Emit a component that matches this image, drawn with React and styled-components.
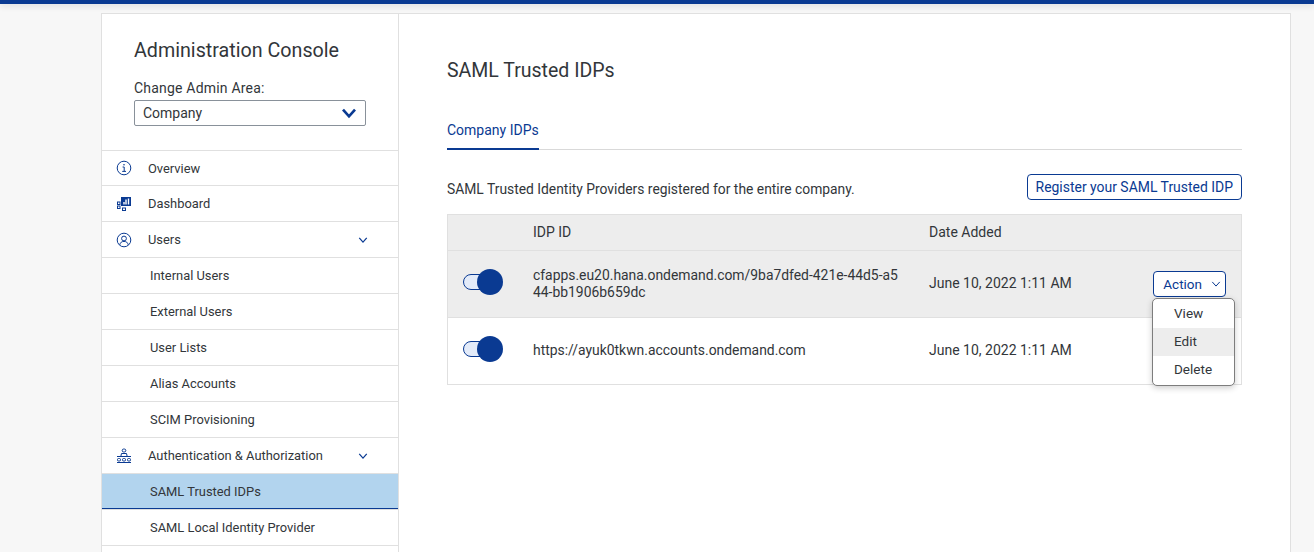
import React from 'react';
import styled, { createGlobalStyle } from 'styled-components';

const GlobalStyle = createGlobalStyle`
  html, body {
    margin: 0;
    height: 552px;
    overflow: hidden;
    background: #f7f7f7;
    font-family: Roboto, "Noto Sans", sans-serif;
    color: #32363a;
  }
`;

const TopBar = styled.div`
  height: 4px;
  background: #0a3a92;
  box-shadow: 0 2px 6px rgba(0, 0, 0, 0.12);
`;

const Shell = styled.div`
  display: flex;
  width: 1188px;
  height: 539px;
  margin: 9px 0 0 101px;
  overflow: hidden;
  background: #fff;
  border: 1px solid #e0e0e0;
  border-width: 1px 1px 0 1px;
`;

const Sidebar = styled.nav`
  width: 296px;
  flex: none;
  border-right: 1px solid #e0e0e0;
`;

const SideHead = styled.div`
  height: 136px;
  box-sizing: border-box;
  padding: 23px 32px 0 32px;
`;

const ConsoleTitle = styled.h2`
  margin: 0;
  font-size: 19.7px;
  font-weight: 400;
  line-height: 28px;
`;

const AreaLabel = styled.div`
  margin-top: 13px;
  font-size: 14px;
  line-height: 20px;
  letter-spacing: 0.2px;
`;

const AreaSelect = styled.div`
  display: flex;
  align-items: center;
  justify-content: space-between;
  width: 232px;
  height: 26px;
  box-sizing: border-box;
  margin-top: 2px;
  padding: 0 8px;
  border: 1px solid #89919a;
  border-radius: 2px;
  font-size: 14px;
`;

const NavRow = styled.div`
  display: flex;
  align-items: center;
  height: ${p => p.$height || 36}px;
  box-sizing: border-box;
  border-top: 1px solid #e0e0e0;
  padding-left: ${p => (p.$child ? 48 : 14)}px;
  padding-right: 30px;
  font-size: 12.9px;
  background: ${p => (p.$active ? '#b2d4ee' : 'transparent')};
  border-bottom: ${p => (p.$active ? '1px solid #0a3a92' : '0')};
`;

const NavIcon = styled.span`
  display: flex;
  width: 18px;
  height: 16px;
  margin-right: 14px;
  color: #0a3a92;
`;

const NavText = styled.span`
  flex: 1;
`;

const Main = styled.main`
  flex: 1;
  min-width: 0;
  padding: 43px 48px 0 48px;
`;

const PageTitle = styled.h1`
  margin: 0;
  font-size: 19.5px;
  font-weight: 400;
  line-height: 27px;
`;

const Tabs = styled.div`
  margin-top: 32px;
  border-bottom: 1px solid #d9d9d9;
  height: 34px;
  box-sizing: border-box;
`;

const Tab = styled.div`
  display: inline-block;
  height: 34px;
  box-sizing: border-box;
  font-size: 14px;
  line-height: 29px;
  color: #0a3a92;
  border-bottom: 2px solid #0a3a92;
`;

const IntroRow = styled.div`
  display: flex;
  align-items: center;
  justify-content: space-between;
  height: 26px;
  margin-top: 24px;
  font-size: 13.85px;
`;

const IntroText = styled.span`
  margin-top: 3px;
`;

const OutlineButton = styled.button`
  display: inline-flex;
  align-items: center;
  height: 26px;
  box-sizing: border-box;
  padding: 0 8px;
  background: #fff;
  border: 1px solid #0a3a92;
  border-radius: 4px;
  color: #0a3a92;
  font: inherit;
  font-size: 13.95px;
`;

const ActionButton = styled(OutlineButton)`
  gap: 9px;
  padding: 0 4px 0 9px;
  font-size: 13.5px;
`;

const Table = styled.div`
  position: relative;
  margin-top: 14px;
  border: 1px solid #e0e0e0;
  font-size: 14px;
`;

const Row = styled.div`
  display: grid;
  grid-template-columns: 85px 396px 224px minmax(0, 1fr);
  align-items: center;
  height: ${p => p.$height}px;
  box-sizing: border-box;
  background: ${p => p.$bg};
  border-top: ${p => (p.$first ? '0' : '1px solid #e0e0e0')};
`;

const TextCell = styled.div`
  margin-bottom: 2px;
`;

const ToggleCell = styled.div`
  position: relative;
  height: 26px;
  margin-bottom: 4px;
`;

const ToggleTrack = styled.span`
  position: absolute;
  left: 15px;
  top: 5px;
  width: 28px;
  height: 16px;
  box-sizing: border-box;
  border: 1px solid #0a3a92;
  border-radius: 8px;
  background: #e3ebf9;
`;

const ToggleKnob = styled.span`
  position: absolute;
  left: 29px;
  top: 0;
  width: 26px;
  height: 26px;
  border-radius: 50%;
  background: #0a3a92;
`;

const IdCell = styled.div`
  font-size: 13.9px;
  line-height: 17px;
  padding-right: 28px;
  margin-bottom: ${p => (p.$single ? 2 : 0)}px;
  word-break: break-all;
`;

const ActionCell = styled.div`
  display: flex;
  justify-content: flex-end;
  padding-right: 15px;
`;

const Menu = styled.div`
  position: absolute;
  left: 704px;
  top: 83px;
  width: 83px;
  box-sizing: border-box;
  padding: 1px 0;
  background: #fff;
  border: 1px solid #7d7d7d;
  border-radius: 5px;
  box-shadow: 0 2px 6px rgba(0, 0, 0, 0.2);
  font-size: 13.5px;
`;

const MenuItem = styled.div`
  height: 28px;
  line-height: 27px;
  padding-left: 21px;
  background: ${p => (p.$hover ? '#ededed' : 'transparent')};
`;

const ChevronDown = ({ size = 12, width = 1.5 }) => (
  <svg width={size} height={size} viewBox="0 0 12 12" fill="none" stroke="#0a3a92" strokeWidth={width}>
    <path d="M1.5 3.5 6 8.5 10.5 3.5" />
  </svg>
);

const InfoIcon = () => (
  <svg width="16" height="16" viewBox="0 0 16 16" fill="none" stroke="currentColor" strokeWidth="1">
    <circle cx="8" cy="8" r="6.8" />
    <path d="M6.6 7h1.6v4.2M6.2 11.4h3.8" />
    <circle cx="8" cy="4.7" r=".8" fill="currentColor" stroke="none" />
  </svg>
);

const DashboardIcon = () => (
  <svg width="16" height="16" viewBox="0 0 16 16" fill="none" stroke="currentColor" strokeWidth="1">
    <rect x="5" y="1" width="10" height="9" fill="currentColor" stroke="none" />
    <path d="M8 8.5V6M10 8.5V3.5M12.5 8.5V2.5" stroke="#fff" strokeWidth="1.4" />
    <rect x="1.5" y="6" width="2.5" height="2.5" />
    <rect x="1.5" y="10" width="2.5" height="2.5" />
    <rect x="6.5" y="12" width="3" height="2.5" />
  </svg>
);

const UserIcon = () => (
  <svg width="16" height="16" viewBox="0 0 16 16" fill="none" stroke="currentColor" strokeWidth="1">
    <circle cx="8" cy="8" r="6.8" />
    <circle cx="8" cy="6.5" r="2.4" />
    <path d="M3.8 12.8c.5-2.4 2-3.4 4.2-3.4s3.7 1 4.2 3.4" />
  </svg>
);

const AuthIcon = () => (
  <svg width="16" height="16" viewBox="0 0 16 16" fill="none" stroke="currentColor" strokeWidth="1">
    <rect x="6.2" y="1" width="3.6" height="3" rx="1.5" />
    <path d="M4.8 8.5 5.5 5.5h5l.7 3M1 8.5h14M1 14.5h14" />
    <rect x="1.5" y="10.5" width="3" height="2.5" rx="1" />
    <rect x="6.5" y="10.5" width="3" height="2.5" rx="1" />
    <rect x="11.5" y="10.5" width="3" height="2.5" rx="1" />
  </svg>
);

const navItems = [
  { label: 'Overview', icon: <InfoIcon />, height: 35 },
  { label: 'Dashboard', icon: <DashboardIcon /> },
  { label: 'Users', icon: <UserIcon />, open: true },
  { label: 'Internal Users', child: true },
  { label: 'External Users', child: true },
  { label: 'User Lists', child: true },
  { label: 'Alias Accounts', child: true },
  { label: 'SCIM Provisioning', child: true },
  { label: 'Authentication & Authorization', icon: <AuthIcon />, open: true },
  { label: 'SAML Trusted IDPs', child: true, active: true },
  { label: 'SAML Local Identity Provider', child: true },
  { label: '', child: true },
];

function Toggle() {
  return (
    <ToggleCell>
      <ToggleTrack />
      <ToggleKnob />
    </ToggleCell>
  );
}

export default function App() {
  return (
    <>
      <GlobalStyle />
      <TopBar />
      <Shell>
        <Sidebar>
          <SideHead>
            <ConsoleTitle>Administration Console</ConsoleTitle>
            <AreaLabel>Change Admin Area:</AreaLabel>
            <AreaSelect>
              Company
              <ChevronDown size={16} width={2} />
            </AreaSelect>
          </SideHead>
          {navItems.map((item, i) => (
            <NavRow key={i} $child={item.child} $active={item.active} $height={item.height}>
              {item.icon && <NavIcon>{item.icon}</NavIcon>}
              <NavText>{item.label}</NavText>
              {item.open && <ChevronDown size={10} />}
            </NavRow>
          ))}
        </Sidebar>
        <Main>
          <PageTitle>SAML Trusted IDPs</PageTitle>
          <Tabs>
            <Tab>Company IDPs</Tab>
          </Tabs>
          <IntroRow>
            <IntroText>SAML Trusted Identity Providers registered for the entire company.</IntroText>
            <OutlineButton>Register your SAML Trusted IDP</OutlineButton>
          </IntroRow>
          <Table>
            <Row $first $height={35} $bg="#ededed">
              <div />
              <TextCell>IDP ID</TextCell>
              <TextCell>Date Added</TextCell>
              <div />
            </Row>
            <Row $height={67} $bg="#ededed">
              <Toggle />
              <IdCell>cfapps.eu20.hana.ondemand.com/9ba7dfed-421e-44d5-a544-bb1906b659dc</IdCell>
              <TextCell>June 10, 2022 1:11 AM</TextCell>
              <ActionCell>
                <ActionButton>
                  Action
                  <ChevronDown size={10} width={1.2} />
                </ActionButton>
              </ActionCell>
            </Row>
            <Row $height={67} $bg="#fff">
              <Toggle />
              <IdCell $single>https://ayuk0tkwn.accounts.ondemand.com</IdCell>
              <TextCell>June 10, 2022 1:11 AM</TextCell>
              <div />
            </Row>
            <Menu>
              <MenuItem>View</MenuItem>
              <MenuItem $hover>Edit</MenuItem>
              <MenuItem>Delete</MenuItem>
            </Menu>
          </Table>
        </Main>
      </Shell>
    </>
  );
}
